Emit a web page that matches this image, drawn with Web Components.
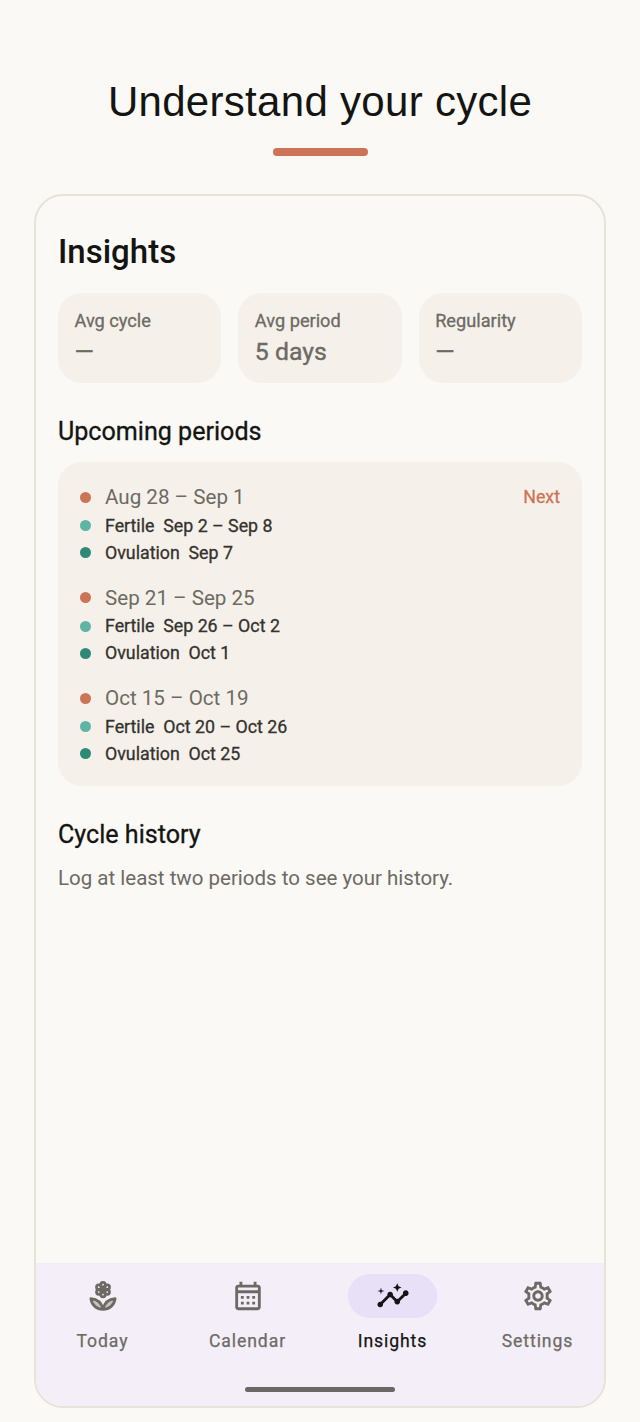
<!DOCTYPE html>
<html lang="en">
<head>
<meta charset="utf-8">
<title>Insights</title>
<style>
  html, body { margin: 0; height: 100%; }
  body { background: #faf9f5; font-family: Roboto, sans-serif; color: #141412; }
</style>
</head>
<body>
<app-screen heading="Understand your cycle">
  <insights-page>
    <stat-card label="Avg cycle" value="—"></stat-card>
    <stat-card label="Avg period" value="5 days"></stat-card>
    <stat-card label="Regularity" value="—"></stat-card>
    <period-group slot="periods" range="Aug 28 – Sep 1" fertile="Sep 2 – Sep 8" ovulation="Sep 7" next></period-group>
    <period-group slot="periods" range="Sep 21 – Sep 25" fertile="Sep 26 – Oct 2" ovulation="Oct 1"></period-group>
    <period-group slot="periods" range="Oct 15 – Oct 19" fertile="Oct 20 – Oct 26" ovulation="Oct 25"></period-group>
  </insights-page>
  <nav-bar slot="nav">
    <nav-item label="Today" icon="flower"></nav-item>
    <nav-item label="Calendar" icon="calendar"></nav-item>
    <nav-item label="Insights" icon="insights" active></nav-item>
    <nav-item label="Settings" icon="settings"></nav-item>
  </nav-bar>
</app-screen>

<script>
const icons = {
  flower: `<g fill="none" stroke="currentColor" stroke-width="1.9">
      <circle cx="12" cy="4" r="1.6"/><circle cx="15" cy="5.75" r="1.6"/><circle cx="15" cy="9.25" r="1.6"/>
      <circle cx="12" cy="11" r="1.6"/><circle cx="9" cy="9.25" r="1.6"/><circle cx="9" cy="5.75" r="1.6"/>
    </g>
    <circle cx="12" cy="7.5" r="1.5"/>
    <path d="M12 21.4c-4.5 0-8-3-8.6-7.6 4.5.3 7.5 2.6 8.6 7.6zm0 0c4.5 0 8-3 8.6-7.6-4.5.3-7.5 2.6-8.6 7.6z" fill="currentColor" fill-opacity=".35" stroke="currentColor" stroke-width="1.9" stroke-linejoin="round"/>`,
  calendar: `<path d="M19 4h-1V2h-2v2H8V2H6v2H5c-1.1 0-2 .9-2 2v14c0 1.1.9 2 2 2h14c1.1 0 2-.9 2-2V6c0-1.1-.9-2-2-2zm0 16H5V10h14v10zm0-12H5V6h14v2z"/><path d="M7 12h2v2H7zm4 0h2v2h-2zm4 0h2v2h-2zM7 16h2v2H7zm4 0h2v2h-2zm4 0h2v2h-2z"/>`,
  insights: `<path d="M21 8c-1.45 0-2.26 1.44-1.93 2.51l-3.55 3.56c-.3-.09-.74-.09-1.04 0l-2.55-2.55C12.27 10.45 11.46 9 10 9c-1.45 0-2.27 1.44-1.93 2.52l-4.56 4.55C2.44 15.74 1 16.55 1 18c0 1.1.9 2 2 2 1.45 0 2.26-1.44 1.93-2.51l4.55-4.56c.3.09.74.09 1.04 0l2.55 2.55C12.73 16.55 13.54 18 15 18c1.45 0 2.27-1.44 1.93-2.52l3.56-3.55c1.07.33 2.51-.48 2.51-1.93 0-1.1-.9-2-2-2z"/><path d="M15 9l.94-2.07L18 6l-2.06-.93L15 3l-.92 2.07L12 6l2.08.93zM3.5 11L4 9l2-.5L4 8l-.5-2L3 8l-2 .5L3 9z"/>`,
  settings: `<path d="M19.43 12.98c.04-.32.07-.64.07-.98 0-.34-.03-.66-.07-.98l2.11-1.65c.19-.15.24-.42.12-.64l-2-3.46c-.09-.16-.26-.25-.44-.25-.06 0-.12.01-.17.03l-2.49 1c-.52-.4-1.08-.73-1.69-.98l-.38-2.65C14.46 2.18 14.25 2 14 2h-4c-.25 0-.46.18-.49.42l-.38 2.65c-.61.25-1.17.59-1.69.98l-2.49-1c-.06-.02-.12-.03-.18-.03-.17 0-.34.09-.43.25l-2 3.46c-.13.22-.07.49.12.64l2.11 1.65c-.04.32-.07.65-.07.98 0 .33.03.66.07.98l-2.11 1.65c-.19.15-.24.42-.12.64l2 3.46c.09.16.26.25.44.25.06 0 .12-.01.17-.03l2.49-1c.52.4 1.08.73 1.69.98l.38 2.65c.03.24.24.42.49.42h4c.25 0 .46-.18.49-.42l.38-2.65c.61-.25 1.17-.59 1.69-.98l2.49 1c.06.02.12.03.18.03.17 0 .34-.09.43-.25l2-3.46c.12-.22.07-.49-.12-.64l-2.11-1.65zm-1.98-1.71c.04.31.05.52.05.73 0 .21-.02.43-.05.73l-.14 1.13.89.7 1.08.84-.7 1.21-1.27-.51-1.04-.42-.9.68c-.43.32-.84.56-1.25.73l-1.06.43-.16 1.13-.2 1.35h-1.4l-.19-1.35-.16-1.13-1.06-.43c-.43-.18-.83-.41-1.23-.71l-.91-.7-1.06.43-1.27.51-.7-1.21 1.08-.84.89-.7-.14-1.13c-.03-.31-.05-.54-.05-.74s.02-.43.05-.73l.14-1.13-.89-.7-1.08-.84.7-1.21 1.27.51 1.04.42.9-.68c.43-.32.84-.56 1.25-.73l1.06-.43.16-1.13.2-1.35h1.39l.19 1.35.16 1.13 1.06.43c.43.18.83.41 1.23.71l.91.7 1.06-.43 1.27-.51.7 1.21-1.07.85-.89.7.14 1.13zM12 8c-2.21 0-4 1.79-4 4s1.79 4 4 4 4-1.79 4-4-1.79-4-4-4zm0 6c-1.1 0-2-.9-2-2s.9-2 2-2 2 .9 2 2-.9 2-2 2z"/>`
};

class AppScreen extends HTMLElement {
  constructor() {
    super();
    this.attachShadow({ mode: 'open' }).innerHTML = `
      <style>
        :host { display: flex; flex-direction: column; height: 100vh; box-sizing: border-box; padding: 0 34px 14px; }
        .head { display: flex; flex-direction: column; align-items: center; padding-top: 76px; height: 118px; }
        h1 { margin: 0; font: 400 42px/52px "Liberation Sans", Arial, sans-serif; color: #141412; white-space: nowrap; letter-spacing: .3px; }
        .rule { width: 95px; height: 8px; border-radius: 4px; background: #cc7458; margin-top: 20px; }
        .frame { flex: 1; display: flex; flex-direction: column; min-height: 0; border: 2px solid #e8e3d8; border-radius: 29px; overflow: hidden; }
        .main { flex: 1; min-height: 0; }
      </style>
      <div class="head"><h1></h1><div class="rule"></div></div>
      <div class="frame">
        <div class="main"><slot></slot></div>
        <slot name="nav"></slot>
      </div>`;
    this.shadowRoot.querySelector('h1').textContent = this.getAttribute('heading');
  }
}

class InsightsPage extends HTMLElement {
  constructor() {
    super();
    this.attachShadow({ mode: 'open' }).innerHTML = `
      <style>
        :host { display: block; padding: 34px 22px 0; }
        h2 { margin: 0; font: 500 33px/44px Roboto, sans-serif; color: #141412; }
        h3 { margin: 0; font: 400 25.1px/32px Roboto, sans-serif; color: #141412; -webkit-text-stroke: .3px currentColor; }
        .stats { display: grid; grid-template-columns: repeat(3, 1fr); gap: 17px; margin-top: 19px; }
        .periods { display: flex; flex-direction: column; gap: 17.5px; margin-top: 14px; padding: 21px 22px 19px; background: #f5f1ea; border-radius: 24px; }
        .up { margin-top: 33px; }
        .hist { margin-top: 33px; }
        p { margin: 13px 0 0; font: 400 20.5px/28px Roboto, sans-serif; color: #6d6a64; }
      </style>
      <h2>Insights</h2>
      <div class="stats"><slot></slot></div>
      <h3 class="up">Upcoming periods</h3>
      <div class="periods"><slot name="periods"></slot></div>
      <h3 class="hist">Cycle history</h3>
      <p>Log at least two periods to see your history.</p>`;
  }
}

class StatCard extends HTMLElement {
  constructor() {
    super();
    this.attachShadow({ mode: 'open' }).innerHTML = `
      <style>
        :host { display: flex; flex-direction: column; height: 90px; box-sizing: border-box; padding: 16px 16.5px; background: #f5f1ea; border-radius: 24px; color: #6d6a64; }
        .l { font: 400 18.2px/24px Roboto, sans-serif; -webkit-text-stroke: .3px currentColor; }
        .v { font: 400 24.8px/32px Roboto, sans-serif; margin-top: 3px; -webkit-text-stroke: .4px currentColor; }
      </style>
      <div class="l"></div><div class="v"></div>`;
    this.shadowRoot.querySelector('.l').textContent = this.getAttribute('label');
    this.shadowRoot.querySelector('.v').textContent = this.getAttribute('value');
  }
}

class PeriodGroup extends HTMLElement {
  constructor() {
    super();
    this.attachShadow({ mode: 'open' }).innerHTML = `
      <style>
        :host { display: block; }
        .row { display: flex; align-items: center; gap: 14px; height: 27px; font: 400 17.8px/24px Roboto, sans-serif; color: #34322e; -webkit-text-stroke: .3px currentColor; }
        .row.top { box-sizing: border-box; height: 29px; padding-bottom: 1px; font: 400 20.6px/28px Roboto, sans-serif; color: #6d6a64; -webkit-text-stroke: 0; }
        .dot { width: 11px; height: 11px; border-radius: 50%; flex: none; }
        .txt { flex: 1; white-space: pre; }
        .next { font: 400 17.8px/24px Roboto, sans-serif; color: #cc7458; -webkit-text-stroke: .3px currentColor; }
      </style>
      <div class="row top"><span class="dot" style="background:#cc7458"></span><span class="txt r"></span></div>
      <div class="row"><span class="dot" style="background:#5fb5a3"></span><span class="txt f"></span></div>
      <div class="row"><span class="dot" style="background:#2e8a78"></span><span class="txt o"></span></div>`;
    const root = this.shadowRoot;
    root.querySelector('.r').textContent = this.getAttribute('range');
    root.querySelector('.f').textContent = 'Fertile  ' + this.getAttribute('fertile');
    root.querySelector('.o').textContent = 'Ovulation  ' + this.getAttribute('ovulation');
    if (this.hasAttribute('next')) {
      const tag = document.createElement('span');
      tag.className = 'next';
      tag.textContent = 'Next';
      root.querySelector('.top').appendChild(tag);
    }
  }
}

class NavBar extends HTMLElement {
  constructor() {
    super();
    this.attachShadow({ mode: 'open' }).innerHTML = `
      <style>
        :host { display: flex; flex-direction: column; align-items: center; height: 143px; background: #f3eef8; }
        .items { display: grid; grid-template-columns: repeat(4, 145px); justify-content: center; width: 100%; box-sizing: border-box; padding: 11px 0 0; height: 124px; }
        .handle { width: 150px; height: 5px; border-radius: 3px; background: #6a6864; }
      </style>
      <div class="items"><slot></slot></div>
      <div class="handle"></div>`;
  }
}

class NavItem extends HTMLElement {
  constructor() {
    super();
    this.attachShadow({ mode: 'open' }).innerHTML = `
      <style>
        :host { display: flex; flex-direction: column; align-items: center; gap: 11px; color: #6d6a64; }
        :host([active]) { color: #141412; }
        .pill { width: 89px; height: 44px; display: flex; align-items: center; justify-content: center; border-radius: 22px; }
        :host([active]) .pill { background: #e8e0f7; }
        svg { width: 34px; height: 34px; fill: currentColor; display: block; }
        span { font: 400 17.6px/24px Roboto, sans-serif; letter-spacing: .9px; -webkit-text-stroke: .25px currentColor; }
      </style>
      <div class="pill"><svg viewBox="0 0 24 24">${icons[this.getAttribute('icon')]}</svg></div>
      <span>${this.getAttribute('label')}</span>`;
  }
}

customElements.define('app-screen', AppScreen);
customElements.define('insights-page', InsightsPage);
customElements.define('stat-card', StatCard);
customElements.define('period-group', PeriodGroup);
customElements.define('nav-bar', NavBar);
customElements.define('nav-item', NavItem);
</script>
</body>
</html>
